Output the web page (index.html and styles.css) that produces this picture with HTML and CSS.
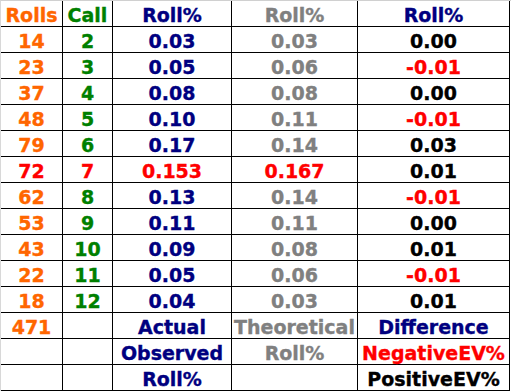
FILE: index.html
```html
<!DOCTYPE html>
<html>
<head>
<meta charset="utf-8">
<link rel="stylesheet" href="styles.css">
</head>
<body>
<div class="sheet">
  <div class="c o">Rolls</div><div class="c g">Call</div><div class="c n">Roll%</div><div class="c y">Roll%</div><div class="c n">Roll%</div>
  <div class="c o">14</div><div class="c g">2</div><div class="c n">0.03</div><div class="c y">0.03</div><div class="c k">0.00</div>
  <div class="c o">23</div><div class="c g">3</div><div class="c n">0.05</div><div class="c y">0.06</div><div class="c r">-0.01</div>
  <div class="c o">37</div><div class="c g">4</div><div class="c n">0.08</div><div class="c y">0.08</div><div class="c k">0.00</div>
  <div class="c o">48</div><div class="c g">5</div><div class="c n">0.10</div><div class="c y">0.11</div><div class="c r">-0.01</div>
  <div class="c o">79</div><div class="c g">6</div><div class="c n">0.17</div><div class="c y">0.14</div><div class="c k">0.03</div>
  <div class="c r">72</div><div class="c r">7</div><div class="c r">0.153</div><div class="c r">0.167</div><div class="c k">0.01</div>
  <div class="c o">62</div><div class="c g">8</div><div class="c n">0.13</div><div class="c y">0.14</div><div class="c r">-0.01</div>
  <div class="c o">53</div><div class="c g">9</div><div class="c n">0.11</div><div class="c y">0.11</div><div class="c k">0.00</div>
  <div class="c o">43</div><div class="c g">10</div><div class="c n">0.09</div><div class="c y">0.08</div><div class="c k">0.01</div>
  <div class="c o">22</div><div class="c g">11</div><div class="c n">0.05</div><div class="c y">0.06</div><div class="c r">-0.01</div>
  <div class="c o">18</div><div class="c g">12</div><div class="c n">0.04</div><div class="c y">0.03</div><div class="c k">0.01</div>
  <div class="c o">471</div><div class="c"></div><div class="c n">Actual</div><div class="c y">Theoretical</div><div class="c n">Difference</div>
  <div class="c"></div><div class="c"></div><div class="c n">Observed</div><div class="c y">Roll%</div><div class="c r">NegativeEV%</div>
  <div class="c"></div><div class="c"></div><div class="c n">Roll%</div><div class="c"></div><div class="c k">PositiveEV%</div>
</div>
</body>
</html>
```
FILE: styles.css
```css
html, body {
  margin: 0;
  padding: 0;
  background: #ffffff;
}
.sheet {
  border-top: 1px solid #d0d0d0;
  border-left: 1px solid #d8d8d8;
  display: grid;
  grid-template-columns: 62px 50px 119px 126px 152px;
  grid-auto-rows: 26px;
  font-family: "DejaVu Sans", Verdana, sans-serif;
  font-weight: bold;
  font-size: 19px;
}
.c {
  box-sizing: border-box;
  border-right: 1px solid #000;
  border-bottom: 1px solid #000;
  display: flex;
  align-items: flex-end;
  justify-content: center;
  white-space: nowrap;
  line-height: 22px;
  padding-bottom: 0;
  overflow: visible;
  -webkit-text-stroke: 0.35px currentColor;
}
.o { color: #ff6600; }
.g { color: #008000; }
.n { color: #000080; }
.y { color: #808080; }
.k { color: #000000; }
.r { color: #ff0000; }
```
